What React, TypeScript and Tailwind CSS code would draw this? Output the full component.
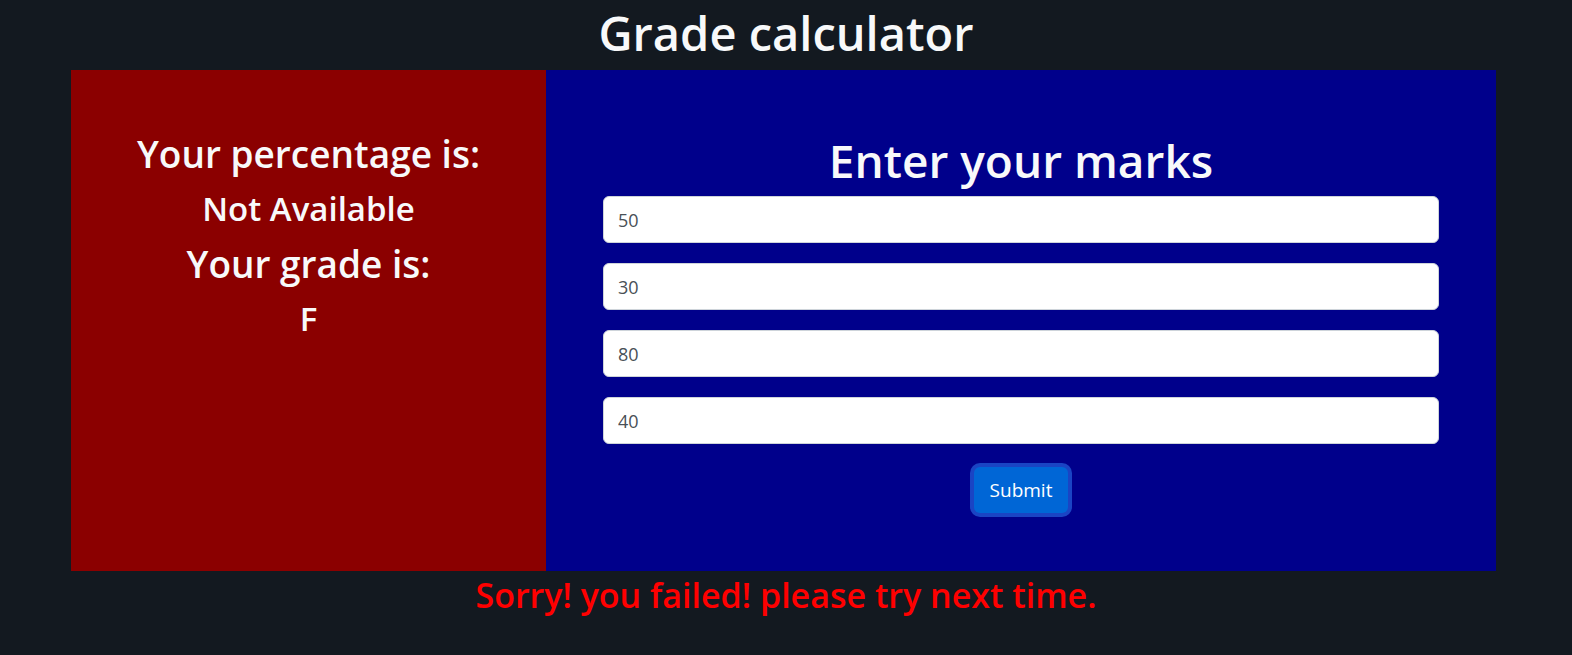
const marks = ["50", "30", "80", "40"];

const App = () => {
  return (
    <div className="min-h-[655px] w-full bg-[#131920] font-['Open_Sans',sans-serif] text-[#f8f9fa]">
      <h1 className="flex h-[70px] items-center justify-center pb-[4px] text-[47px] font-semibold leading-none">
        Grade calculator
      </h1>
      <div className="ml-[71px] flex h-[501px] w-[1425px]">
        <div className="flex w-1/3 flex-col items-center bg-[#8b0000] pt-[56px] font-semibold">
          <h2 className="text-[37px] leading-[55px]">Your percentage is:</h2>
          <h3 className="text-[33px] leading-[55px]">Not Available</h3>
          <h2 className="text-[37px] leading-[55px]">Your grade is:</h2>
          <h3 className="text-[33px] leading-[55px]">F</h3>
        </div>
        <div className="flex flex-1 flex-col bg-[#00008b] px-[57px] pt-[60px]">
          <h2 className="mb-[6px] text-center text-[46px] font-semibold leading-[60px]">
            Enter your marks
          </h2>
          <form className="flex flex-col gap-[20px]" onSubmit={(e) => e.preventDefault()}>
            {marks.map((m) => (
              <input
                key={m}
                defaultValue={m}
                className="h-[47px] w-full rounded-[6px] border border-[#ced4da] bg-white px-[14px] text-[18px] text-[#495057] outline-none"
              />
            ))}
            <div className="flex justify-center pt-[3px]">
              <button
                type="submit"
                className="h-[46px] w-[94px] rounded-[6px] bg-[#0066d6] text-[19px] text-white ring-4 ring-[#1a44c4]"
              >
                Submit
              </button>
            </div>
          </form>
        </div>
      </div>
      <p className="text-center text-[34px] font-semibold leading-[48px] text-[#ff0000]">
        Sorry! you failed! please try next time.
      </p>
    </div>
  );
};

export default App;
